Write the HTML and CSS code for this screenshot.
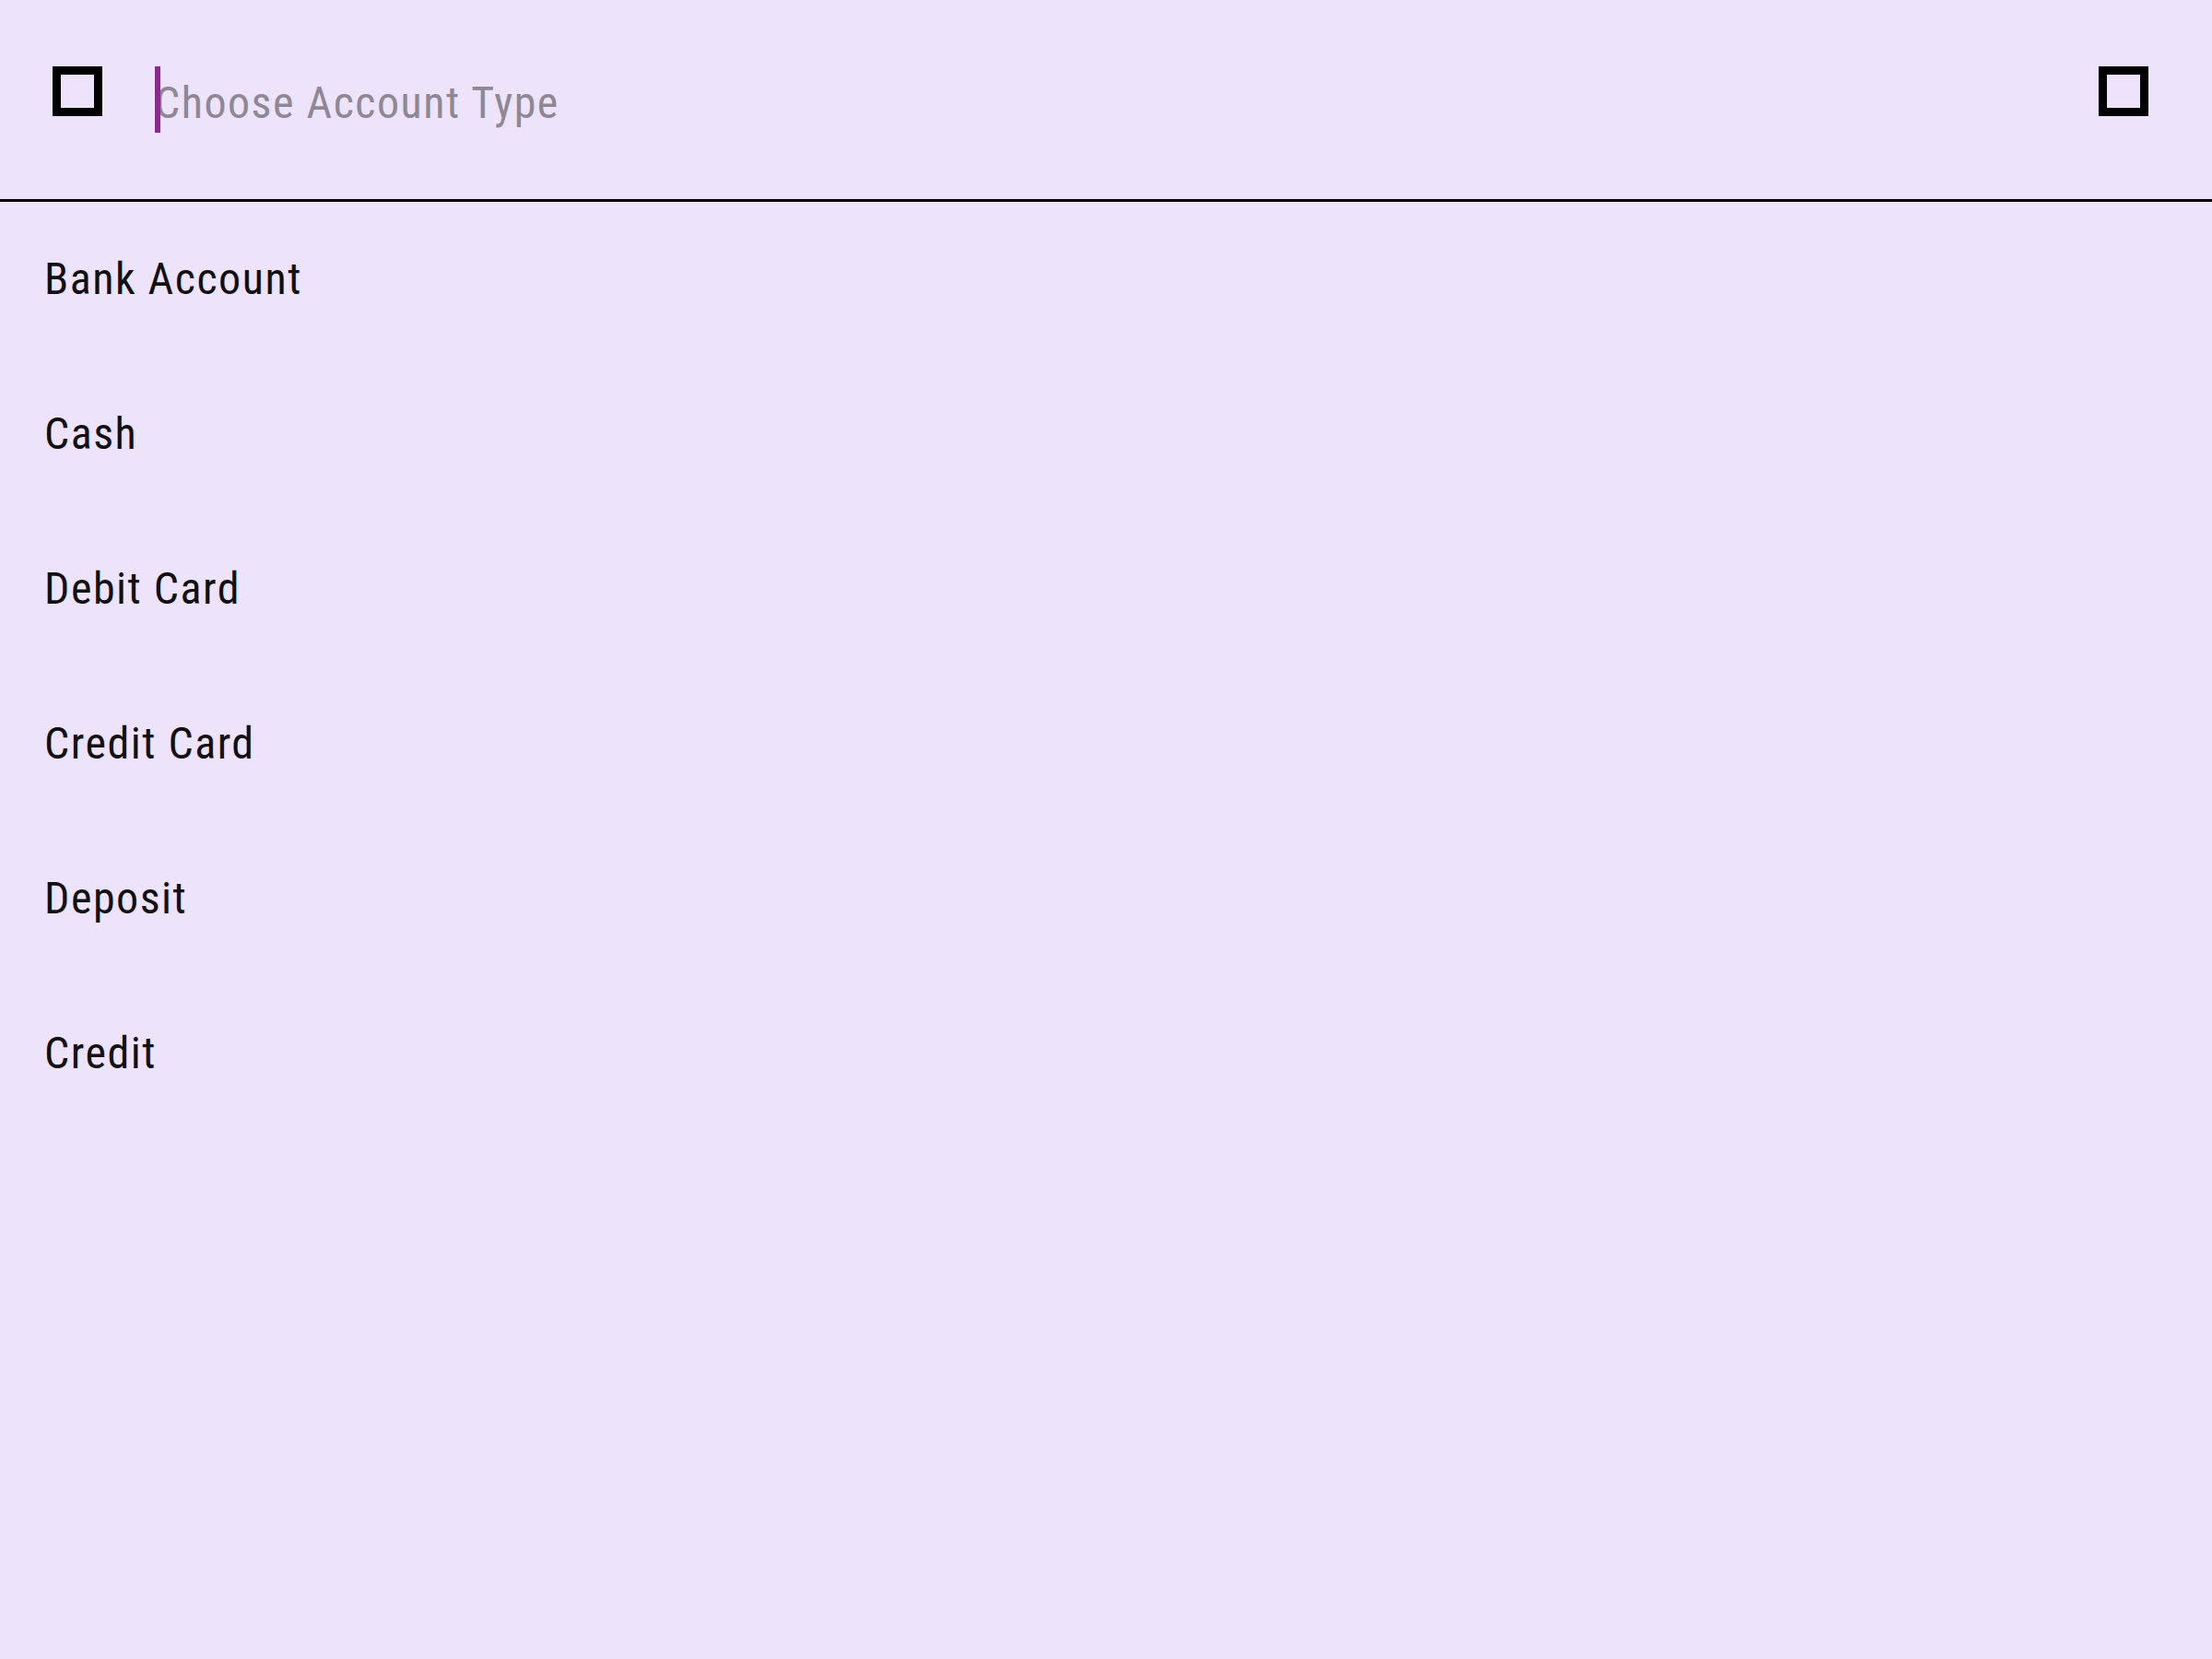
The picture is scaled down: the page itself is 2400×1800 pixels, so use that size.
FILE: index.html
```html
<!DOCTYPE html>
<html lang="en">
<head>
<meta charset="utf-8">
<title>Choose Account Type</title>
<link rel="stylesheet" href="styles.css">
</head>
<body>
<div class="search-view">
  <header class="search-header">
    <span class="icon icon-leading" aria-hidden="true"></span>
    <div class="field">
      <span class="placeholder">Choose Account Type</span>
      <span class="caret"></span>
    </div>
    <span class="icon icon-trailing" aria-hidden="true"></span>
  </header>
  <ul class="options">
    <li class="option">Bank Account</li>
    <li class="option">Cash</li>
    <li class="option">Debit Card</li>
    <li class="option">Credit Card</li>
    <li class="option">Deposit</li>
    <li class="option">Credit</li>
  </ul>
</div>
</body>
</html>
```

FILE: styles.css
```css
html, body {
  margin: 0;
  padding: 0;
}

body {
  background: #ede3fb;
  font-family: Roboto, "Liberation Sans", sans-serif;
  font-stretch: 87.5%;
  width: 2400px;
  height: 1800px;
}

.search-view {
  display: flex;
  flex-direction: column;
}

.search-header {
  height: 216px;
  display: flex;
  align-items: flex-start;
  border-bottom: 3px solid #000;
}

.icon {
  box-sizing: border-box;
  width: 54px;
  height: 54px;
  margin-top: 72px;
  border: 9px solid #000;
  flex: none;
}

.icon-leading {
  margin-left: 57px;
}

.icon-trailing {
  margin-right: 69px;
}

.field {
  flex: 1;
  display: flex;
  align-items: center;
  margin-left: 57px;
  margin-top: 72px;
  height: 72px;
  position: relative;
}

.caret {
  position: absolute;
  left: 0;
  top: 0;
  width: 6px;
  height: 72px;
  background: #8f2692;
}

.placeholder {
  font-size: 48px;
  line-height: 72px;
  letter-spacing: 1.5px;
  color: #8e8896;
  padding-top: 7px;
}

.options {
  list-style: none;
  margin: 0;
  padding: 0;
}

.option {
  height: 168px;
  display: flex;
  align-items: center;
  padding-left: 48px;
  font-size: 48px;
  line-height: 72px;
  letter-spacing: 1.5px;
  color: #111014;
}
```
